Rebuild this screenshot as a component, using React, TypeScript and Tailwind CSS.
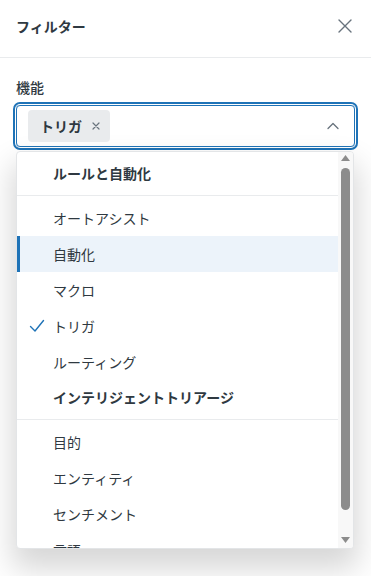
import React from "react";

const font = { fontFamily: '"Noto Sans CJK JP", "Noto Sans", sans-serif' };

type Item = { label: string; active?: boolean; checked?: boolean };
type Group = { title: string; items: Item[] };

const groups: Group[] = [
  {
    title: "ルールと自動化",
    items: [
      { label: "オートアシスト" },
      { label: "自動化", active: true },
      { label: "マクロ" },
      { label: "トリガ", checked: true },
      { label: "ルーティング" },
    ],
  },
  {
    title: "インテリジェントトリアージ",
    items: [
      { label: "目的" },
      { label: "エンティティ" },
      { label: "センチメント" },
      { label: "言語" },
    ],
  },
];

function CheckIcon() {
  return (
    <svg width="16" height="16" viewBox="0 0 16 16" fill="none">
      <path d="M1.5 8.5 L6 13 L14.5 2.5" stroke="#1f73b7" strokeWidth="1.4" strokeLinecap="round" strokeLinejoin="round" />
    </svg>
  );
}

function Option({ item }: { item: Item }) {
  return (
    <li
      className={
        "relative h-9 flex items-center pl-[36px] text-[14px] text-[#2f3941] " +
        (item.active ? "bg-[#ecf3fa] shadow-[inset_3px_0_0_#1f73b7]" : "")
      }
    >
      {item.checked && (
        <span className="absolute left-[12px] top-[10px]">
          <CheckIcon />
        </span>
      )}
      {item.label}
    </li>
  );
}

export default function App() {
  return (
    <div className="w-[371px] h-[576px] bg-white overflow-hidden" style={font}>
      <div className="h-[58px] px-4 pt-[16px] flex justify-between border-b border-[#e9ebed]">
        <h2 className="text-[14px] leading-5 font-bold text-[#2f3941]">フィルター</h2>
        <svg width="14" height="14" viewBox="0 0 14 14" className="mt-[3px] mr-[3px]">
          <path d="M1 1 L13 13 M13 1 L1 13" stroke="#68737d" strokeWidth="1.4" strokeLinecap="round" />
        </svg>
      </div>

      <div className="px-4 pt-[19px]">
        <label className="block text-[14px] leading-5 font-medium text-[#2f3941] mb-2">機能</label>

        <div className="h-[42px] border border-[#1f73b7] rounded-[4px] shadow-[0_0_0_1px_#fff,0_0_0_3px_#1f73b7] flex items-center pl-[11px] pr-[15px]">
          <span className="h-8 rounded-[4px] bg-[#e9ebed] flex items-center pl-3 pr-[10px] gap-[10px] text-[14px] font-semibold text-[#2f3941]">
            トリガ
            <svg width="8" height="8" viewBox="0 0 8 8">
              <path d="M1 1 L7 7 M7 1 L1 7" stroke="#68737d" strokeWidth="1.2" strokeLinecap="round" />
            </svg>
          </span>
          <svg width="12" height="8" viewBox="0 0 12 8" className="ml-auto">
            <path d="M1 6.5 L6 1.5 L11 6.5" stroke="#68737d" strokeWidth="1.3" fill="none" strokeLinecap="round" strokeLinejoin="round" />
          </svg>
        </div>

        <div className="mt-1 h-[398px] w-[338px] border border-[#e3e5e7] rounded-[4px] bg-white shadow-[0_16px_30px_4px_rgba(0,0,0,0.16)] flex overflow-hidden">
          <ul className="flex-1 pt-1 overflow-hidden">
            {groups.map((g) => (
              <li key={g.title}>
                <div className="h-10 pb-1 pl-[36px] flex items-center text-[14px] font-bold text-[#2f3941] border-b border-[#e9ebed]">
                  {g.title}
                </div>
                <ul className="pt-1">
                  {g.items.map((it) => (
                    <Option key={it.label} item={it} />
                  ))}
                </ul>
              </li>
            ))}
          </ul>

          <div className="w-[15px] bg-[#f8f8f8] flex flex-col items-center py-[3px]">
            <svg width="9" height="6" viewBox="0 0 9 6">
              <path d="M4.5 0 L9 6 L0 6 Z" fill="#8c8c8c" />
            </svg>
            <div className="w-[9px] h-[342px] mt-[7px] rounded-full bg-[#8c8c8c]" />
            <svg width="9" height="6" viewBox="0 0 9 6" className="mt-auto mb-[2px]">
              <path d="M0 0 L9 0 L4.5 6 Z" fill="#8c8c8c" />
            </svg>
          </div>
        </div>
      </div>
    </div>
  );
}
